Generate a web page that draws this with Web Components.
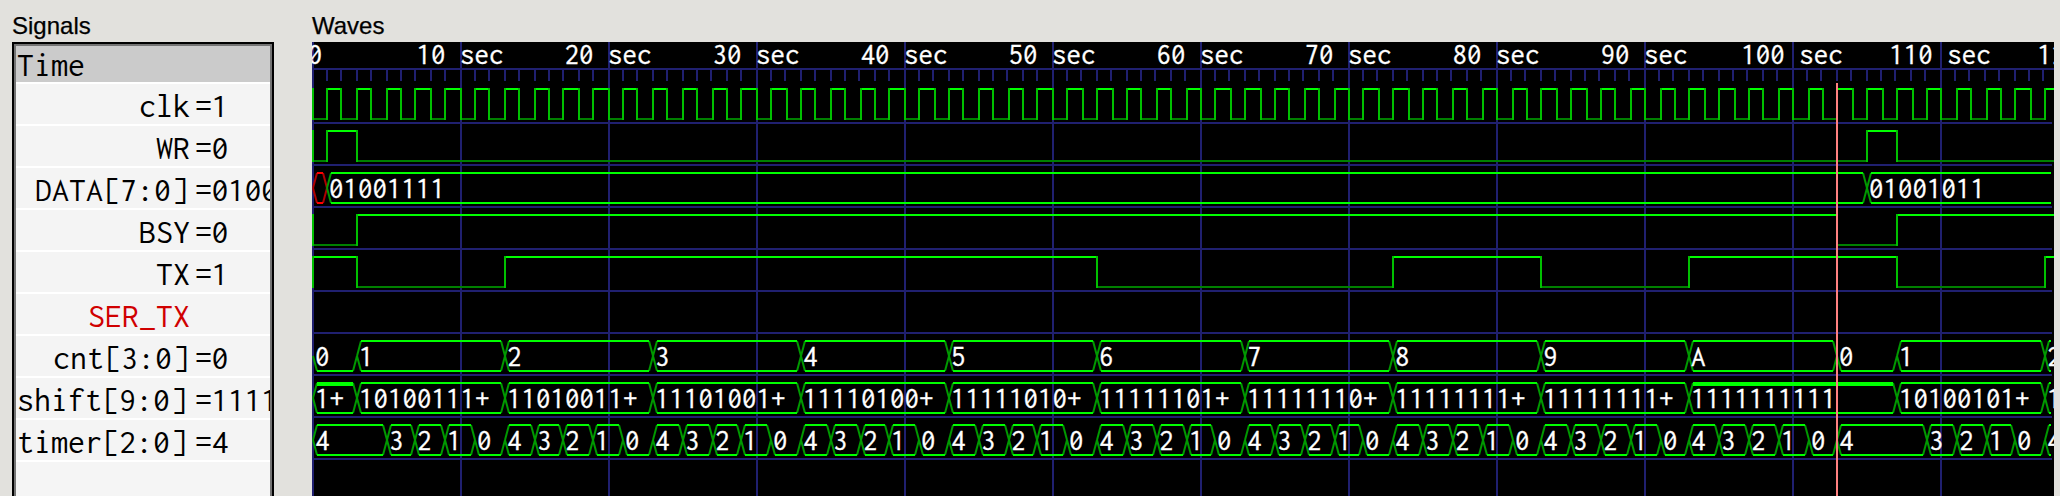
<!DOCTYPE html>
<html lang="en">
<head>
<meta charset="utf-8">
<title>Waves</title>
<style>
html,body{margin:0;height:100%;overflow:hidden;background:#e2e1dd}
</style>
</head>
<body>
<wave-viewer></wave-viewer>
<script>
const MONO = 'Inconsolata,"DejaVu Sans Mono",monospace';
const WIDTH = 1742;
const timeX = t => 1 + 2 * Math.floor(t * 200 / 27);
const tickX = t => 1 + 2 * Math.floor(t * 7.4 + 1e-6);
const HIGH = 7, LOW = 37, MID = 22, ROW = 42, END = 119;

function shadow(el, html) {
  el.attachShadow({ mode: 'open' }).innerHTML = html;
}
const line = (x1, y1, x2, y2, c, w = 2) =>
  `<line x1="${x1}" y1="${y1}" x2="${x2}" y2="${y2}" stroke="${c}" stroke-width="${w}"/>`;

/* Titled frame: caption above, content slotted below */
customElements.define('view-pane', class extends HTMLElement {
  constructor() {
    super();
    shadow(this, `<style>
      :host{display:flex;flex-direction:column;height:496px}
      header{flex:none;height:42px;box-sizing:border-box;padding-top:12px;font:24px/27px "Liberation Sans",Arial,sans-serif;color:#000;-webkit-text-stroke:.25px #000}
      slot{display:block}
    </style><header></header><slot></slot>`);
  }
  connectedCallback() { this.shadowRoot.querySelector('header').textContent = this.getAttribute('caption'); }
});

/* One signal name with its value at the marker */
customElements.define('signal-row', class extends HTMLElement {
  constructor() {
    super();
    shadow(this, `<style>
      :host{display:flex;height:40px;border-bottom:2px solid #fff;background:#f4f4f4;white-space:pre;overflow:hidden;font:34px/43px ${MONO};color:#000}
      :host([head]){height:36px;background:#cbcbcb;line-height:38px}
      :host([floating]){color:#d00000}
      .n{flex:none;box-sizing:border-box;width:174px;display:flex;justify-content:flex-end;padding-right:var(--inset,0)}
      .v{flex:none;margin-left:5px;letter-spacing:-.5px}
      :host([head]) .n{justify-content:flex-start;padding-left:1px}
    </style><span class="n"><slot></slot></span><span class="v"><slot name="value"></slot></span>`);
  }
});

customElements.define('signal-list', class extends HTMLElement {
  constructor() {
    super();
    shadow(this, `<style>
      :host{display:block;box-sizing:border-box;width:262px;height:470px;border:2px solid #000;background:#f5f5f5}
      div{box-sizing:border-box;height:100%;border:2px solid #747474;overflow:hidden}
    </style><div><slot></slot></div>`);
  }
});

/* Time ruler */
customElements.define('time-ruler', class extends HTMLElement {
  constructor() {
    super();
    let s = line(0, 27, WIDTH, 27, '#202070');
    for (let t = 0; t < 118; t++) if (t % 10) s += line(tickX(t), 28, tickX(t), 39, '#202070');
    for (let t = 0; t <= 120; t += 10)
      s += `<text x="${tickX(t) + (t ? -1 : 2)}" y="22" text-anchor="middle">${t ? t + ' sec' : '0'}</text>`;
    shadow(this, `<style>:host{display:block;height:40px}svg{display:block}
      text{font:29px ${MONO};fill:#fff;stroke:#fff;stroke-width:.3px;white-space:pre}</style>
      <svg width="${WIDTH}" height="40">${s}</svg>`);
  }
});

/* Single-bit trace: start="0|1" edges="t t t" */
customElements.define('bit-trace', class extends HTMLElement {
  constructor() {
    super();
    shadow(this, `<style>:host{display:block;height:42px}svg{display:block}</style><svg width="${WIDTH}" height="42"></svg>`);
  }
  connectedCallback() {
    let v = +this.getAttribute('start');
    const e = this.getAttribute('edges') === 'clock'
      ? Array.from({ length: END }, (_, i) => i + 1)
      : this.getAttribute('edges').split(' ').map(Number);
    const pts = [0, ...e, END + 3];
    let h = '', verts = '';
    for (let i = 0; i < pts.length - 1; i++) {
      const a = timeX(pts[i]), b = timeX(pts[i + 1]), y = v ? HIGH : LOW;
      h += line(a, y, b, y, v ? '#00ff00' : '#008000');
      verts += line(a, HIGH - 1, a, LOW + 1, '#00c000');
      v = 1 - v;
    }
    this.shadowRoot.querySelector('svg').innerHTML = h + verts;
  }
});

/* Bus trace: data="t:value t:value"; x marks an undefined value */
customElements.define('bus-trace', class extends HTMLElement {
  constructor() {
    super();
    shadow(this, `<style>:host{display:block;height:42px}svg{display:block}
      text{font:29px ${MONO};fill:#fff;stroke:#fff;stroke-width:.3px;white-space:pre}</style><svg width="${WIDTH}" height="42"></svg>`);
  }
  connectedCallback() {
    const d = this.getAttribute('data').trim().split(/\s+/).map(p => p.split(':'));
    let s = '', labels = '';
    d.forEach(([t, v], i) => {
      const a = timeX(+t), last = i === d.length - 1;
      const b = last ? 1739 : timeX(+d[i + 1][0]);
      const undef = v === 'x', zero = v === '0', ones = v === '1+' || v === '1111111111';
      const c = undef ? '#ff0000' : '#00ff00', leg = undef ? '#b00000' : '#009a00';
      const l = a + 4, r = last ? b : b - 4;
      s += line(a, MID, l, LOW, leg);
      if (!last) s += line(r, LOW, b, MID, leg);
      if (!zero) {
        s += line(a, MID, l, HIGH, leg);
        if (!last) s += line(r, HIGH, b, MID, leg);
        s += ones ? line(l, HIGH + 1, r, HIGH + 1, c, 4) : line(l, HIGH, r, HIGH, c);
      }
      s += line(l, LOW, r, LOW, c);
      if (!undef) labels += `<text x="${a + 2}" y="32">${v}</text>`;
    });
    this.shadowRoot.querySelector('svg').innerHTML = s + labels;
  }
});

/* Black canvas: grid beneath the traces, marker above */
customElements.define('wave-canvas', class extends HTMLElement {
  constructor() {
    super();
    let g = '';
    for (let t = 0; t < 118; t += 10) g += line(tickX(t), 0, tickX(t), 454, '#202070');
    for (let i = 0; i < 9; i++) g += line(0, 81 + ROW * i, 1740, 81 + ROW * i, '#202070');
    shadow(this, `<style>
      :host{display:block;position:relative;width:${WIDTH}px;height:454px;background:#000;overflow:hidden}
      .grid{position:absolute;left:0;top:0}
      .rows{position:relative}
      .marker{position:absolute;left:${timeX(103) - 1}px;top:41px;width:2px;bottom:0;background:#ff8080}
    </style>
    <svg class="grid" width="${WIDTH}" height="454">${g}</svg>
    <div class="rows"><slot></slot></div><div class="marker"></div>`);
  }
});

customElements.define('empty-trace', class extends HTMLElement {
  constructor() { super(); shadow(this, '<style>:host{display:block;height:42px}</style>'); }
});

const shiftData = '0:1+ 3:10100111+ 13:11010011+ 23:11101001+ 33:11110100+ 43:11111010+ 53:11111101+ 63:11111110+ 73:11111111+ 83:11111111+ 93:1111111111 107:10100101+ 117:1';
const cntData = '0:0 3:1 13:2 23:3 33:4 43:5 53:6 63:7 73:8 83:9 93:A 103:0 107:1 117:2';
let timerData = '0:4 5:3 7:2 9:1 11:0';
for (let t = 13; t < 103; t += 10) timerData += ` ${t}:4 ${t + 2}:3 ${t + 4}:2 ${t + 6}:1 ${t + 8}:0`;
timerData += ' 103:4 109:3 111:2 113:1 115:0 117:4';

customElements.define('wave-viewer', class extends HTMLElement {
  constructor() {
    super();
    const row = (n, v, inset = 0) => `<signal-row style="--inset:${inset}px">${n}<span slot="value">=${v}</span></signal-row>`;
    shadow(this, `<style>
      :host{display:flex;gap:38px;padding-left:12px;height:496px;overflow:hidden}
    </style>
    <view-pane caption="Signals"><signal-list>
      <signal-row head>Time</signal-row>
      ${row('clk', 1)}${row('WR', 0)}${row('DATA[7:0]', '0100', 2)}${row('BSY', 0)}${row('TX', 1)}
      <signal-row floating>SER_TX</signal-row>
      ${row('cnt[3:0]', 0, 1)}${row('shift[9:0]', '1111', 3)}${row('timer[2:0]', 4, 3)}
    </signal-list></view-pane>
    <view-pane caption="Waves"><wave-canvas>
      <time-ruler></time-ruler>
      <bit-trace start="0" edges="clock"></bit-trace>
      <bit-trace start="0" edges="1 3 105 107"></bit-trace>
      <bus-trace data="0:x 1:01001111 105:01001011"></bus-trace>
      <bit-trace start="0" edges="3 103 107"></bit-trace>
      <bit-trace start="1" edges="3 13 53 73 83 93 107 117"></bit-trace>
      <empty-trace></empty-trace>
      <bus-trace data="${cntData}"></bus-trace>
      <bus-trace data="${shiftData}"></bus-trace>
      <bus-trace data="${timerData}"></bus-trace>
    </wave-canvas></view-pane>`);
  }
});
</script>
</body>
</html>
